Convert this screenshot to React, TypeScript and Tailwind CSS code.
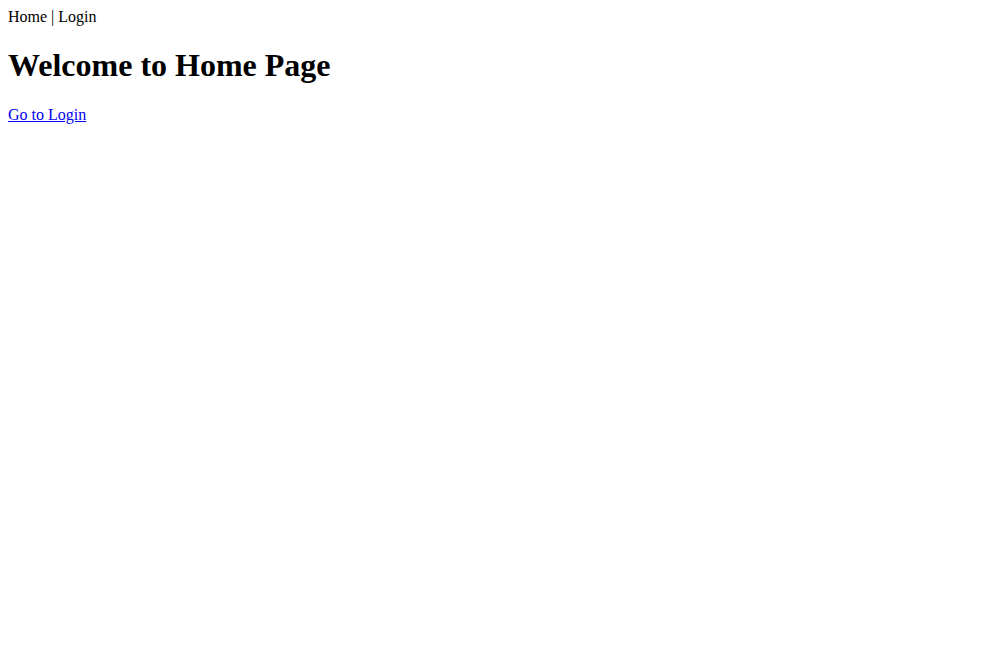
export default function App() {
  return (
    <div className="min-h-[660px] bg-white p-2 font-['Liberation_Serif',serif] text-base leading-[normal] text-black">
      <nav>
        <a href="#" className="text-black">Home</a> | <a href="#" className="text-black">Login</a>
      </nav>
      <h1 className="mt-[21.44px] mb-[21.44px] text-[32px] font-bold leading-[normal]">Welcome to Home Page</h1>
      <a href="#" className="text-[#0000EE] underline">Go to Login</a>
    </div>
  );
}
